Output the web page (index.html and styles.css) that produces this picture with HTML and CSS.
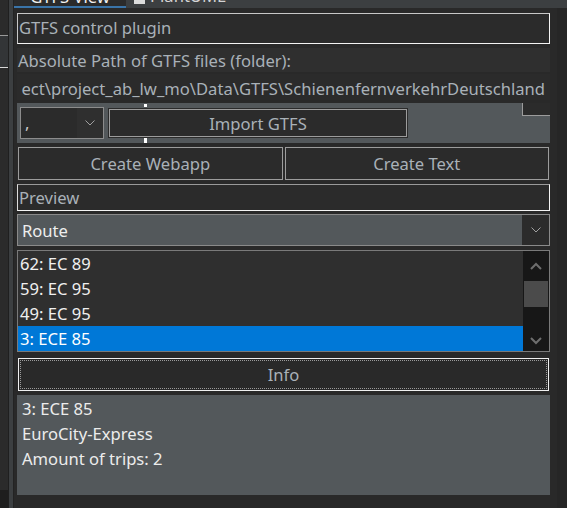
FILE: index.html
```html
<!DOCTYPE html>
<html>
<head>
<meta charset="utf-8">
<link rel="stylesheet" href="styles.css">
</head>
<body>
<div class="app">
  <div class="side">
    <div class="side-a"><div class="side-sel"></div><div class="side-fill"></div><div class="side-bottom"></div></div>
    <div class="side-b"></div>
    <div class="side-c"></div>
    <div class="side-d"></div>
  </div>
  <div class="main">
    <div class="tabs">
      <div class="tab active"><span class="tab-text">GTFS View</span></div>
      <div class="tab other">
        <span class="tab-icon"></span><span class="tab-text">PlantUML</span>
      </div>
    </div>
    <div class="body">
      <div class="panel">
        <div class="title-box">GTFS control plugin</div>
        <div class="label-row">Absolute Path of GTFS files (folder):</div>
        <div class="path-field"><span>ect\project_ab_lw_mo\Data\GTFS\SchienenfernverkehrDeutschland</span></div>
        <div class="gray-row">
          <div class="small-combo">
            <span class="sc-text">,</span>
            <span class="sc-drop">
              <svg width="10" height="6" viewBox="0 0 10 6"><path d="M0.5 0.5 L5 5 L9.5 0.5" fill="none" stroke="#a0a0a0" stroke-width="1"/></svg>
            </span>
          </div>
          <div class="btn import-btn">Import GTFS</div>
          <div class="corner-box"></div>
          <span class="handle h-top"></span>
          <span class="handle h-bot"></span>
        </div>
        <div class="btn-row">
          <div class="btn wide-btn">Create Webapp</div>
          <div class="btn wide-btn">Create Text</div>
        </div>
        <div class="preview-box">Preview</div>
        <div class="route-combo">
          <span class="rc-text">Route</span>
          <span class="rc-drop">
            <svg width="10" height="6" viewBox="0 0 10 6"><path d="M0.5 0.5 L5 5 L9.5 0.5" fill="none" stroke="#a0a0a0" stroke-width="1"/></svg>
          </span>
        </div>
        <div class="list">
          <div class="list-items">
            <div class="item">62: EC 89</div>
            <div class="item">59: EC 95</div>
            <div class="item">49: EC 95</div>
            <div class="item selected">3: ECE 85</div>
          </div>
          <div class="scrollbar">
            <svg class="arrow up" width="12" height="8" viewBox="0 0 12 8"><path d="M1 7 L6 2 L11 7" fill="none" stroke="#6e6e6e" stroke-width="2"/></svg>
            <div class="track"><div class="thumb"></div></div>
            <svg class="arrow down" width="12" height="8" viewBox="0 0 12 8"><path d="M1 1 L6 6 L11 1" fill="none" stroke="#6e6e6e" stroke-width="2"/></svg>
          </div>
        </div>
        <div class="info-btn"><div class="info-inner">Info</div></div>
        <div class="info-text">
          <div>3: ECE 85</div>
          <div>EuroCity-Express</div>
          <div>Amount of trips: 2</div>
        </div>
      </div>
      <div class="rstrip"></div>
    </div>
  </div>
</div>
</body>
</html>
```

FILE: styles.css
```css
* { box-sizing: border-box; }
html, body { margin: 0; padding: 0; }
body {
  background: #262626;
  font-family: "Noto Sans", "Open Sans", sans-serif;
  font-size: 16.6px;
  color: #a9b1b8;
}
.app { display: flex; width: 567px; height: 508px; overflow: hidden; }

.side { display: flex; width: 14px; height: 508px; }
.side-a { width: 8px; display: flex; flex-direction: column; background: #2b2b2b; padding-top: 35px; }
.side-sel { height: 33px; background: #333537; border-top: 1px solid #9a9a9a; border-bottom: 1px solid #d8d8d8; }
.side-fill { flex: 1; }
.side-bottom { height: 18px; background: #1e1e1e; }
.side-b { width: 1px; background: #1f1f1f; }
.side-c { width: 4px; background: #3c3f41; }
.side-d { width: 1px; background: #232323; }

.main { flex: 1; display: flex; flex-direction: column; }
.tabs { height: 8px; display: flex; background: #3c3f41; overflow: hidden; }
.tab { height: 8px; display: flex; align-items: flex-end; overflow: hidden; position: relative; }
.tab.active { width: 112px; background: #2b2b2b; border-bottom: 2px solid #3a74a8; justify-content: center; }
.tab.other { margin-left: 2px; padding-left: 6px; background: #3c3f41; }
.tab-text { font-size: 16.6px; line-height: 16px; color: #f2f2f2; margin-bottom: 3px; white-space: nowrap; }
.tab.active .tab-text { margin-bottom: 1px; }
.tab.other .tab-text { color: #d4d4d4; margin-left: 5px; margin-bottom: 4px; }
.tab-icon { width: 11px; height: 4px; background: #dcdcdc; align-self: flex-start; margin-top: 0; }

.body { flex: 1; display: flex; }
.panel { width: 543px; background: #292929; padding: 5px 7px 0 3px; display: flex; flex-direction: column; }
.rstrip { width: 10px; background: #262626; }

.title-box {
  height: 31px; border: 1px solid #c8c8c8; border-right-color: #f4f4f4; border-bottom-color: #f4f4f4;
  padding-left: 1px; line-height: 28px; background: #2b2b2b;
}
.label-row { margin-top: 4px; height: 24px; background: #2f2f2f; padding-left: 1px; line-height: 25px; }
.path-field {
  margin-top: 2px; height: 26px; background: #2b2b2b; display: flex; justify-content: flex-end;
  overflow: hidden; line-height: 30px; padding-right: 5px; white-space: nowrap;
}
.path-field span { flex: none; }

.gray-row {
  margin-top: 3px; height: 40px; background: #53585b; display: flex; align-items: center; position: relative;
}
.small-combo {
  margin-left: 3px; width: 84px; height: 32px; border: 1px solid #8c8c8c; background: #2b2b2b; display: flex;
}
.sc-text { flex: 1; padding-left: 4px; line-height: 30px; color: #c8c8c8; }
.sc-drop { width: 26px; background: #2f2f2f; display: flex; align-items: center; justify-content: center; }
.btn {
  border: 1px solid #9c9c9c; background: #2b2b2b; box-shadow: 0 0 0 1px #2b2b2b;
  display: flex; align-items: center; justify-content: center; color: #a9b1b8;
}
.import-btn { margin-left: 5px; width: 298px; height: 28px; }
.corner-box {
  align-self: flex-start; margin-left: auto; width: 28px; height: 13px; background: #2b2b2b;
  border-left: 1px solid #9c9c9c; border-bottom: 1px solid #9c9c9c;
}
.handle { position: absolute; left: 127px; width: 3px; background: #ffffff; }
.h-top { top: 1px; height: 3px; }
.h-bot { top: 35px; height: 5px; }

.btn-row { margin-top: 4px; height: 33px; display: flex; gap: 2px; padding: 0 1px; }
.wide-btn { flex: 1; height: 33px; }

.preview-box {
  margin-top: 4px; height: 27px; border: 1px solid #9a9a9a; border-left-color: #dcdcdc;
  border-right-color: #f4f4f4; border-bottom-color: #f4f4f4; line-height: 26px; padding-left: 1px; background: #2b2b2b;
}
.route-combo {
  margin-top: 3px; height: 32px; border: 1px solid #8a8a8a; background: #53585b; display: flex;
}
.rc-text { flex: 1; padding-left: 4px; line-height: 32px; color: #eeeeee; }
.rc-drop { width: 27px; background: #2b2b2b; display: flex; align-items: center; justify-content: center; }

.list { margin-top: 4px; height: 102px; border: 1px solid #7a7a7a; background: #2f2f2f; display: flex; }
.list-items { flex: 1; display: flex; flex-direction: column; }
.item { height: 25px; line-height: 26px; padding-left: 2px; color: #f0f0f0; }
.item.selected { background: #0078d7; color: #ffffff; }
.scrollbar { width: 26px; background: #171717; display: flex; flex-direction: column; align-items: center; }
.arrow { flex: none; }
.arrow.up { margin-top: 11px; }
.track { flex: 1; width: 100%; padding: 11px 1px 0 1px; }
.thumb { height: 26px; background: #4b4b4b; }
.arrow.down { margin-bottom: 6px; }

.info-btn { margin-top: 6px; height: 33px; border: 1px solid #f0f0f0; margin-left: 1px; margin-right: 1px; padding: 1px; }
.info-inner {
  height: 100%; border: 1px dotted #9a9a9a; display: flex; align-items: center; justify-content: center; color: #a9b1b8;
}
.info-text { margin-top: 4px; height: 100px; background: #53585b; padding: 1px 0 0 5px; color: #ececec; }
.info-text div { height: 25px; line-height: 25px; }
```
